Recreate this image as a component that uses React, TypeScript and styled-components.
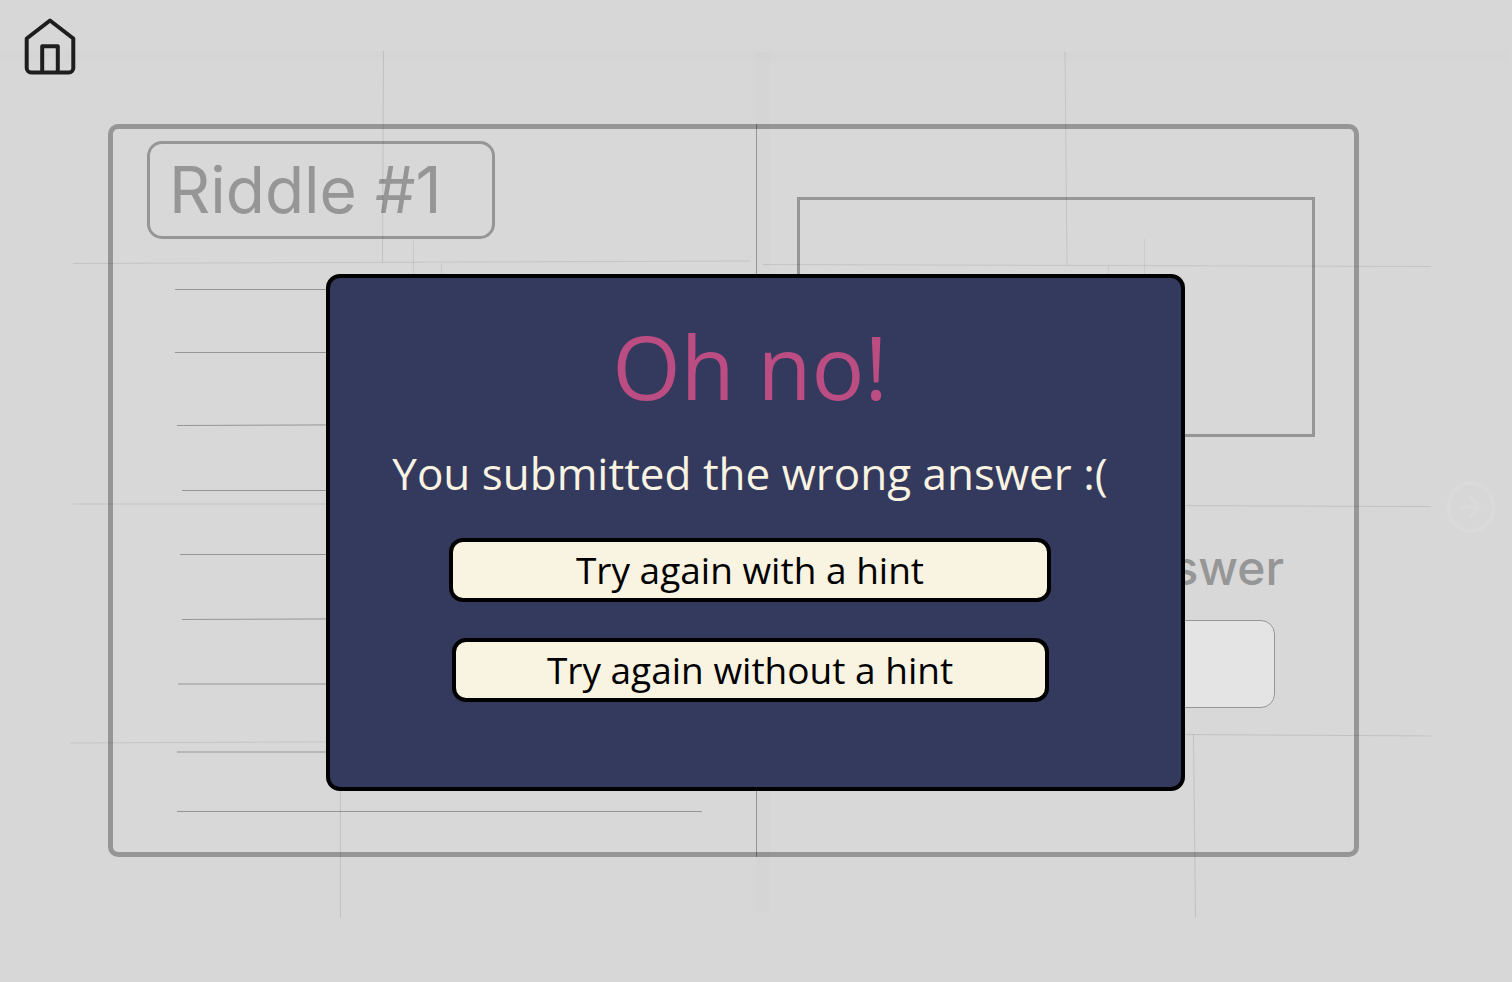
import React from "react";
import styled, { createGlobalStyle } from "styled-components";

const ink = "rgba(0, 0, 0, 0.305)";

const GlobalStyle = createGlobalStyle`
  *, *::before, *::after { box-sizing: border-box; }
  body { margin: 0; background: #d7d7d7; }
  h1, h2, p { margin: 0; font-weight: 400; }
  button { font: inherit; cursor: pointer; }
`;

const Page = styled.div`
  position: relative;
  min-height: 100vh;
  display: flex;
  flex-direction: column;
  background: #d7d7d7;
  font-family: Inter, "Liberation Sans", sans-serif;
`;

const Backdrop = styled.svg`
  position: absolute;
  inset: 0;
  width: 100%;
  height: 100%;
  pointer-events: none;
`;

const Header = styled.header`
  height: 124px;
  padding: 16px 22px;
`;

const HomeLink = styled.a`
  display: block;
  width: 56px;
  height: 60px;
  svg { display: block; }
`;

const Stage = styled.main`
  display: grid;
  grid-template-columns: 108px minmax(0, 1fr) 153px;
  padding-bottom: 125px;
`;

const Book = styled.div`
  grid-column: 2;
  display: grid;
  grid-template-columns: 643px minmax(0, 1fr);
  min-height: 733px;
  border: 5px solid ${ink};
  border-radius: 10px;
  background: #d8d8d8;
`;

const LeftPage = styled.section`
  display: flex;
  flex-direction: column;
  align-items: flex-start;
  padding: 12px 34px 0;
`;

const RiddleTitle = styled.h1`
  width: 348px;
  height: 98px;
  padding-left: 19px;
  border: 3px solid ${ink};
  border-radius: 15px;
  color: #969696;
  font-size: 64px;
  line-height: 92px;
`;

const Rules = styled.svg`
  display: block;
  margin: 41px 0 0 28px;
`;

const RightPage = styled.section`
  display: flex;
  flex-direction: column;
  margin: -5px 0;
  padding: 73px 39px 0 40px;
  border-left: 1px solid ${ink};
`;

const ClueFrame = styled.div`
  height: 240px;
  border: 3px solid ${ink};
`;

const AnswerForm = styled.form`
  display: flex;
  flex-direction: column;
  padding: 101px 31px 0 40px;
`;

const AnswerLabel = styled.label`
  align-self: flex-end;
  color: #969696;
  font-size: 48px;
  font-weight: 500;
  line-height: 60px;
`;

const AnswerRow = styled.div`
  padding: 22px 9px 0 0;
`;

const AnswerInput = styled.input`
  width: 100%;
  height: 88px;
  padding: 0 20px;
  border: 1px solid #969696;
  border-radius: 14px;
  background: #e4e4e4;
  font: inherit;
  font-size: 32px;
`;

const NextButton = styled.button`
  grid-column: 3;
  place-self: center end;
  width: 52px;
  height: 56px;
  margin: 32px 15px 0 0;
  padding: 0;
  border: 0;
  background: transparent;
  svg { display: block; }
`;

const Overlay = styled.div`
  position: absolute;
  inset: 0;
  padding: 274px 327px 0 326px;
`;

const Dialog = styled.section`
  display: flex;
  flex-direction: column;
  align-items: center;
  padding: 36px 11px 85px 0;
  border: 4px solid #000;
  border-radius: 14px;
  background: #34395e;
  font-family: "Open Sans", "Noto Sans", sans-serif;
`;

const DialogTitle = styled.h2`
  color: #bb4d82;
  font-size: 88px;
  line-height: 104px;
`;

const DialogText = styled.p`
  margin-top: 25px;
  color: #f9f3e1;
  font-size: 44px;
  line-height: 60px;
  white-space: nowrap;
`;

const Actions = styled.div`
  display: flex;
  flex-direction: column;
  align-items: center;
  gap: 36px;
  margin-top: 35px;
`;

const ActionButton = styled.button<{ $width: number }>`
  width: ${(p) => p.$width}px;
  height: 64px;
  padding: 0;
  border: 4px solid #000;
  border-radius: 14px;
  background: #f9f3e1;
  color: #000;
  font-size: 37px;
  line-height: 56px;
  white-space: nowrap;
`;

const ruleLines = [
  [0, 9, 527, 9],
  [0, 72, 527, 72],
  [2, 145, 527, 143],
  [7, 210, 527, 210],
  [5, 274, 527, 274],
  [7, 339, 527, 337],
  [3, 403.5, 527, 403.5],
  [2, 471.5, 527, 471.5],
  [2, 531, 527, 531],
];

const gridLines = [
  [383.5, 51, 382.5, 262, 0.1],
  [1065, 52, 1067, 265, 0.09],
  [73, 263.5, 750, 261, 0.09],
  [763, 264.5, 1431, 266.5, 0.09],
  [413.5, 241, 413.5, 300, 0.07],
  [441.5, 264, 441.5, 300, 0.07],
  [1144.5, 239, 1144.5, 300, 0.06],
  [1108.5, 266, 1108.5, 300, 0.06],
  [73, 504, 750, 504, 0.1],
  [763, 504, 1431, 506.6, 0.1],
  [70, 743, 750, 740, 0.09],
  [763, 732, 1431, 736, 0.1],
  [340.5, 760, 340.5, 918, 0.1],
  [1193.5, 734, 1195.5, 917, 0.1],
];

export default function App() {
  return (
    <>
      <GlobalStyle />
      <Page>
        <Header>
          <HomeLink href="#home" aria-label="Home">
            <svg width="56" height="60" viewBox="22 16 56 60" fill="none" stroke="#1e1e1e" strokeWidth="4" strokeLinejoin="round">
              <path d="M26.700 38.500 50 20.500 73.300 38.500V68a4.500 4.500 0 0 1-4.500 4.500H31.200a4.500 4.500 0 0 1-4.500-4.500Z" />
              <path d="M42.200 72V46.200H57.800V72" />
            </svg>
          </HomeLink>
        </Header>

        <Stage>
          <Book>
            <LeftPage>
              <RiddleTitle>Riddle #1</RiddleTitle>
              <Rules width="527" height="540" viewBox="0 0 527 540" stroke="#969696" aria-hidden="true">
                {ruleLines.map(([x1, y1, x2, y2], i) => (
                  <line key={i} x1={x1} y1={y1 + 0.5} x2={x2} y2={y2 + 0.5} />
                ))}
              </Rules>
            </LeftPage>
            <RightPage>
              <ClueFrame />
              <AnswerForm onSubmit={(e) => e.preventDefault()}>
                <AnswerLabel htmlFor="answer">Your answer</AnswerLabel>
                <AnswerRow>
                  <AnswerInput id="answer" type="text" />
                </AnswerRow>
              </AnswerForm>
            </RightPage>
          </Book>
          <NextButton type="button" aria-label="Next riddle">
            <svg width="52" height="56" viewBox="0 0 52 56" fill="none" stroke="#dadada" strokeWidth="4" strokeLinecap="round" strokeLinejoin="round">
              <ellipse cx="26" cy="28" rx="22.500" ry="24" />
              <path d="M17 28H34M26 18.500 34.500 28 26 37.500" />
            </svg>
          </NextButton>
        </Stage>

        <Backdrop viewBox="0 0 1512 982" preserveAspectRatio="none" aria-hidden="true">
          <rect x="0" y="51" width="1506" height="10" fill="#000" opacity="0.006" />
          <rect x="756" y="52" width="14" height="860" fill="#000" opacity="0.006" />
          {gridLines.map(([x1, y1, x2, y2, o], i) => (
            <line key={i} x1={x1} y1={y1} x2={x2} y2={y2} stroke="#000" strokeOpacity={o} />
          ))}
        </Backdrop>

        <Overlay>
          <Dialog role="dialog" aria-modal="true" aria-labelledby="result-title">
            <DialogTitle id="result-title">Oh no!</DialogTitle>
            <DialogText>You submitted the wrong answer :(</DialogText>
            <Actions>
              <ActionButton type="button" $width={602}>Try again with a hint</ActionButton>
              <ActionButton type="button" $width={597}>Try again without a hint</ActionButton>
            </Actions>
          </Dialog>
        </Overlay>
      </Page>
    </>
  );
}
